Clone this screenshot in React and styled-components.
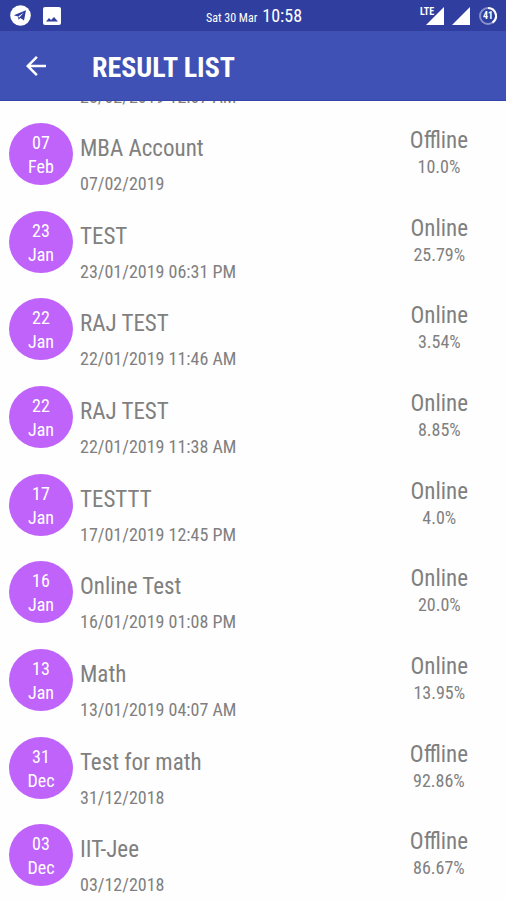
import styled, { createGlobalStyle } from 'styled-components';

const GlobalStyle = createGlobalStyle`
  body {
    margin: 0;
    background: #fefefe;
    font-family: 'Roboto Condensed', 'Liberation Sans Narrow', Roboto, sans-serif;
    color: #808080;
  }
`;

const Screen = styled.div`
  height: 100vh;
  display: flex;
  flex-direction: column;
  overflow: hidden;
`;

const Top = styled.header`
  flex-shrink: 0;
  color: #fff;
`;

const StatusBar = styled.div`
  display: grid;
  grid-template-columns: 1fr auto 1fr;
  align-items: center;
  height: 31px;
  padding: 0 8px 0 10px;
  background: #303f9f;
`;

const StatusGroup = styled.div`
  display: flex;
  align-items: center;
  justify-content: ${props => props.$end ? 'flex-end' : 'flex-start'};
  gap: ${props => props.$end ? '8px' : '12px'};

  svg {
    display: block;
  }
`;

const Clock = styled.div`
  display: flex;
  align-items: baseline;
  gap: 5px;
  font-size: 18px;
`;

const Day = styled.span`
  font-size: 12px;
`;

const Toolbar = styled.div`
  display: flex;
  align-items: center;
  gap: 38px;
  height: 70px;
  padding: 0 18px;
  box-sizing: border-box;
  border-bottom: 1px solid #3545ab;
  background: #3f51b5;
`;

const BackButton = styled.button`
  display: flex;
  padding: 3px;
  border: 0;
  background: none;
  color: inherit;
  cursor: pointer;
`;

const Title = styled.h1`
  margin: 0;
  padding-top: 4px;
  font-size: 28px;
  line-height: 32px;
  font-weight: 700;
`;

const List = styled.ul`
  display: flex;
  flex: 1;
  flex-direction: column;
  min-height: 0;
  margin: 0;
  padding: 0 0 3px;
  list-style: none;
  overflow: hidden;
`;

const Row = styled.li`
  display: flex;
  flex: 1 0 84px;
  padding: 0 38px 0 9px;
`;

const ScrolledRow = styled.li`
  display: flex;
  align-items: flex-end;
  flex: none;
  height: 7px;
  padding: 0 38px 0 80px;
  overflow: hidden;
`;

const DateBadge = styled.div`
  display: flex;
  flex-direction: column;
  align-items: center;
  justify-content: center;
  flex-shrink: 0;
  width: 64px;
  height: 62px;
  margin: 15px 7px 0 0;
  padding-top: 2px;
  box-sizing: border-box;
  border-radius: 50%;
  background: #c063fb;
  color: #fff;
  font-size: 18px;
  line-height: 24px;
`;

const Details = styled.div`
  flex: 1;
  padding-top: 27px;
`;

const Name = styled.div`
  font-size: 23px;
  line-height: 28px;
`;

const Taken = styled.div`
  padding-top: 10px;
  font-size: 18px;
  line-height: 22px;
`;

const Score = styled.div`
  padding-top: 19px;
  text-align: center;
`;

const Percent = styled.div`
  font-size: 18px;
  line-height: 24px;
`;

const results = [
  { day: '07', month: 'Feb', name: 'MBA Account', taken: '07/02/2019', mode: 'Offline', percent: '10.0%' },
  { day: '23', month: 'Jan', name: 'TEST', taken: '23/01/2019 06:31 PM', mode: 'Online', percent: '25.79%' },
  { day: '22', month: 'Jan', name: 'RAJ TEST', taken: '22/01/2019 11:46 AM', mode: 'Online', percent: '3.54%' },
  { day: '22', month: 'Jan', name: 'RAJ TEST', taken: '22/01/2019 11:38 AM', mode: 'Online', percent: '8.85%' },
  { day: '17', month: 'Jan', name: 'TESTTT', taken: '17/01/2019 12:45 PM', mode: 'Online', percent: '4.0%' },
  { day: '16', month: 'Jan', name: 'Online Test', taken: '16/01/2019 01:08 PM', mode: 'Online', percent: '20.0%' },
  { day: '13', month: 'Jan', name: 'Math', taken: '13/01/2019 04:07 AM', mode: 'Online', percent: '13.95%' },
  { day: '31', month: 'Dec', name: 'Test for math', taken: '31/12/2018', mode: 'Offline', percent: '92.86%' },
  { day: '03', month: 'Dec', name: 'IIT-Jee', taken: '03/12/2018', mode: 'Offline', percent: '86.67%' },
];

function TelegramIcon() {
  return (
    <svg width="21" height="21" viewBox="0 0 21 21" aria-hidden="true">
      <circle cx="10.5" cy="10.5" r="10.3" fill="#fff" />
      <path d="M3.8 10.2 16 5.2 14 15.6 10.4 13 8.6 14.8 8 11.6Z" fill="#303f9f" />
      <path d="M8.2 11.6 13.8 7.4 9.4 12.4" fill="#fff" />
    </svg>
  );
}

function ImageIcon() {
  return (
    <svg width="18" height="18" viewBox="0 0 18 18" aria-hidden="true">
      <rect width="18" height="18" rx="2" fill="#fff" />
      <path d="M3 14.5 6 11 8 13 11 10 15 14.5Z" fill="#303f9f" />
    </svg>
  );
}

function LteSignalIcon() {
  return (
    <svg width="24" height="20" viewBox="0 0 24 20" aria-hidden="true">
      <path d="M24 1V19H6Z" fill="#fff" />
      <text x="0" y="9" fontSize="10" fontWeight="700" fill="#fff" stroke="#303f9f" strokeWidth="1" paintOrder="stroke">LTE</text>
    </svg>
  );
}

function SignalIcon() {
  return (
    <svg width="18" height="20" viewBox="0 0 18 20" aria-hidden="true">
      <path d="M18 1V19H0Z" fill="#fff" />
    </svg>
  );
}

function BatteryIcon() {
  return (
    <svg width="20" height="20" viewBox="0 0 20 20" aria-hidden="true">
      <circle cx="10" cy="10" r="8" fill="none" stroke="#8790cb" strokeWidth="2" />
      <path d="M10 2A8 8 0 0 1 14.5 16.6" fill="none" stroke="#fff" strokeWidth="2" />
      <text x="10" y="13" fontSize="10" fontWeight="700" textAnchor="middle" fill="#fff">41</text>
    </svg>
  );
}

function App() {
  return (
    <Screen>
      <GlobalStyle />
      <Top>
        <StatusBar>
          <StatusGroup>
            <TelegramIcon />
            <ImageIcon />
          </StatusGroup>
          <Clock><Day>Sat 30 Mar</Day>10:58</Clock>
          <StatusGroup $end>
            <LteSignalIcon />
            <SignalIcon />
            <BatteryIcon />
          </StatusGroup>
        </StatusBar>
        <Toolbar>
          <BackButton aria-label="Back">
            <svg width="30" height="30" viewBox="0 0 24 24" aria-hidden="true">
              <path d="M20 11H7.83l5.59-5.59L12 4l-8 8 8 8 1.41-1.41L7.83 13H20v-2z" fill="currentColor" />
            </svg>
          </BackButton>
          <Title>RESULT LIST</Title>
        </Toolbar>
      </Top>
      <List>
        <ScrolledRow>
          <Taken>28/02/2019 12:07 AM</Taken>
        </ScrolledRow>
        {results.map(result => (
          <Row key={result.taken}>
            <DateBadge>
              <span>{result.day}</span>
              <span>{result.month}</span>
            </DateBadge>
            <Details>
              <Name>{result.name}</Name>
              <Taken>{result.taken}</Taken>
            </Details>
            <Score>
              <Name>{result.mode}</Name>
              <Percent>{result.percent}</Percent>
            </Score>
          </Row>
        ))}
      </List>
    </Screen>
  );
}

export default App;
